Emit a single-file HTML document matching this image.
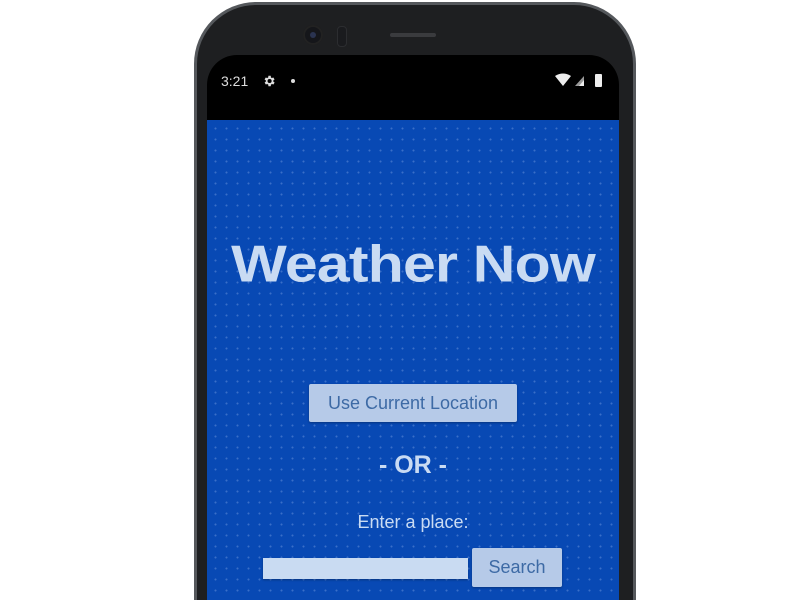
<!DOCTYPE html>
<html><head><style>
html,body{margin:0;padding:0;width:800px;height:600px;overflow:hidden;background:#fff;font-family:"Liberation Sans",sans-serif;}
#wrap{position:relative;width:800px;height:600px;overflow:hidden;}
.phone{position:absolute;left:194px;top:2px;width:436px;height:595px;background:#1e1f21;border-radius:62px 62px 0 0;border:3px solid #55585c;border-bottom:none;}
.screen{position:absolute;left:207px;top:55px;width:412px;height:545px;background:#000;border-radius:30px 30px 0 0;overflow:hidden;}
.app{position:absolute;left:0;top:65px;width:412px;height:480px;background-color:#0849b4;background-image:radial-gradient(circle,#3a6fc8 0.8px,transparent 1.2px);background-size:11px 11px;background-position:3px 3px;}
.abs{position:absolute;}
.c{text-align:center;width:412px;left:0;}
.btn{background:#b6cae8;color:#3d6aa5;border-radius:2px;box-shadow:0 1px 2px rgba(0,0,0,.3);text-align:center;}
</style></head><body><div id="wrap">
<div class="phone"></div>
<div class="abs" style="left:303px;top:25px;width:20px;height:20px;border-radius:50%;background:#15161a;box-shadow:inset 0 0 0 2px #222"></div>
<div class="abs" style="left:310px;top:32px;width:6px;height:6px;border-radius:50%;background:#2a3350"></div>
<div class="abs" style="left:337px;top:26px;width:8px;height:19px;border-radius:4px;background:#1a1b1e;border:1px solid #2c2d30"></div>
<div class="abs" style="left:390px;top:33px;width:46px;height:4px;background:#3a3b3e;border-radius:2px"></div>
<div class="screen">
 <div class="abs" style="left:14px;top:18px;color:#ddd;font-size:14px">3:21</div>
 <svg class="abs" style="left:55px;top:19px" width="14" height="14" viewBox="0 0 24 24"><path fill="#ddd" d="M19.4 13a7.5 7.5 0 0 0 0-2l2.1-1.6-2-3.5-2.5 1a7 7 0 0 0-1.7-1L15 3h-4l-.4 2.9a7 7 0 0 0-1.700 1l-2.5-1-2 3.5L6.6 11a7.5 7.5 0 0 0 0 2l-2.1 1.6 2 3.5 2.5-1a7 7 0 0 0 1.7 1L11 21h4l.4-2.9a7 7 0 0 0 1.7-1l2.5 1 2-3.5zM13 15.5a3.5 3.5 0 1 1 0-7 3.5 3.5 0 0 1 0 7z"/></svg>
 <div class="abs" style="left:84px;top:24px;width:4px;height:4px;border-radius:50%;background:#ddd"></div>
 <svg class="abs" style="left:348px;top:18px" width="50" height="15" viewBox="0 0 50 15"><path fill="#eee" d="M0 3 Q8 -2 16 3 L8 13z"/><path fill="#999" d="M20 13 L29 3 L29 13z"/><path fill="#eee" d="M24 13 L29 7 L29 13z"/><rect x="40" y="1" width="7" height="13" rx="1" fill="#eee"/></svg>
 <div class="app">
  <div class="abs c" style="top:110px;font-size:59px;font-weight:bold;color:#c9dbf3;letter-spacing:-0.8px;transform:scaleY(0.88)">Weather Now</div>
  <div class="abs btn" style="left:102px;top:264px;width:208px;height:38px;line-height:38px;font-size:18px">Use Current Location</div>
  <div class="abs c" style="top:331px;font-size:25px;font-weight:bold;color:#c9dbf3">- OR -</div>
  <div class="abs c" style="top:392px;font-size:18px;color:#c9dbf3">Enter a place:</div>
  <div class="abs" style="left:56px;top:438px;width:205px;height:21px;background:#c9dbf2;box-shadow:0 1px 2px rgba(0,0,0,.3)"></div>
  <div class="abs btn" style="left:265px;top:428px;width:90px;height:39px;line-height:39px;font-size:18px">Search</div>
 </div>
</div>
</div></body></html>
